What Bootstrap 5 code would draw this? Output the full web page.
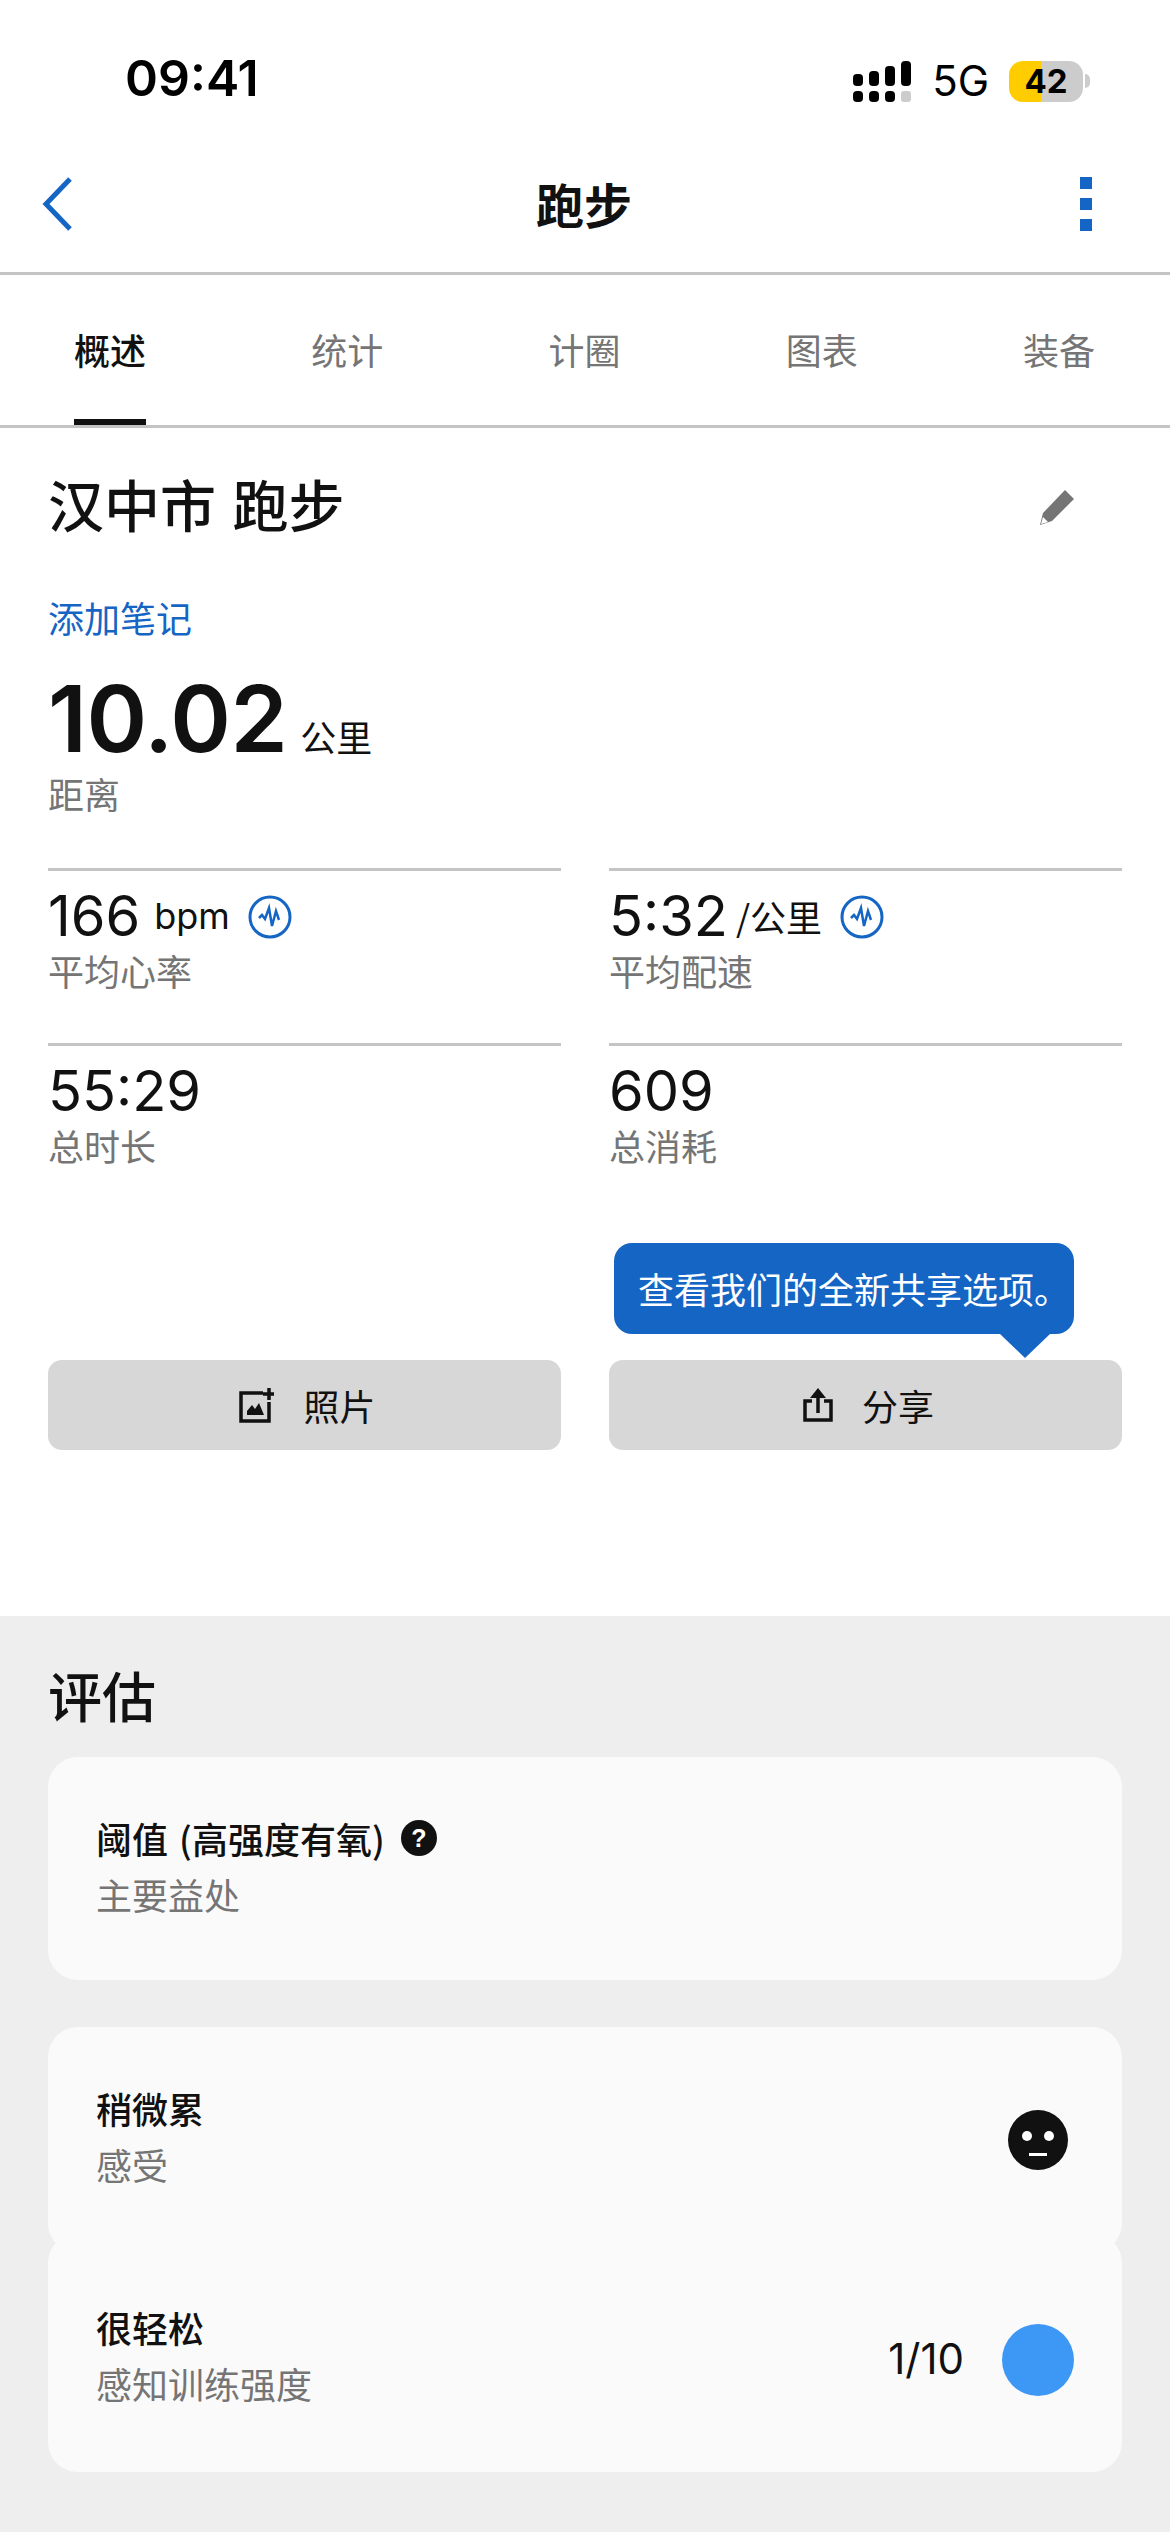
<!DOCTYPE html>
<html lang="zh-CN">
<head>
  <meta charset="UTF-8" />
  <meta name="viewport" content="width=device-width, initial-scale=1" />
  <title>跑步</title>
  <link href="https://cdn.jsdelivr.net/npm/bootstrap@5.3.0/dist/css/bootstrap.min.css" rel="stylesheet" />
  <style>
    body {
      width: 1170px;
      height: 2532px;
      overflow: hidden;
      background: #eee;
      color: #111;
      font-family: Inter, "Noto Sans CJK SC", sans-serif;
      font-size: 36px;
      line-height: 1.2;
    }
    .cjk { font-family: "Noto Sans CJK SC", sans-serif; }
    .top-area { background: #fff; height: 1616px; }

    .status-bar { height: 150px; padding: 50px 80px 0 125px; }
    .clock { font-size: 50px; font-weight: 600; color: #000; line-height: 56px; }
    .net { font-size: 42px; color: #000; margin: 0 20px 0 21px; line-height: 48px; }
    .battery {
      width: 74px; height: 41px; border-radius: 14px;
      background: linear-gradient(90deg, #ffcc00 43%, #ccc 43%);
      font-size: 33px; font-weight: 700; color: #000; line-height: 41px; text-align: center;
    }
    .batt-nub { width: 5px; height: 14px; background: #ccc; border-radius: 0 7px 7px 0; margin-left: 2px; }
    .signal-wrap { margin-top: 7px; }

    .app-bar { height: 125px; padding: 0 78px 15px 42px; border-bottom: 3px solid #c4c4c4; }
    .app-title { font-size: 48px; font-weight: 700; margin-left: 16px; }

    .tab-row { height: 153px; padding: 0 75px 0 74px; border-bottom: 3px solid #c4c4c4; }
    .tab-item { height: 150px; line-height: 148px; color: #757575; font-size: 36px; padding: 0; }
    .tab-item.active { color: #111; font-weight: 500; border-bottom: 6px solid #111; }

    .summary { padding: 0 48px; }
    .run-name { font-size: 56px; font-weight: 500; margin: 0; line-height: 80px; word-spacing: 4px; }
    .title-row { padding: 35px 0 0; }
    .pencil-btn { margin: 8px 48px 0 0; }
    .note-link { color: #1565c4; text-decoration: none; display: block; margin-top: 50px; line-height: 48px; }
    .big-num { font-size: 92px; font-weight: 600; line-height: 90px; letter-spacing: -0.5px; }
    .big-row { margin-top: 33px; }
    .unit { font-size: 36px; margin-left: 13px; }
    .sub-txt { color: #757575; font-size: 36px; line-height: 46px; }
    .dist-label { margin-top: 6px; }
    .stat-grid { margin-top: 52px; display: grid; grid-template-columns: 513px 513px; column-gap: 48px; }
    .stat-cell { border-top: 3px solid #c4c4c4; height: 175px; padding-top: 15px; }
    .stat-val { font-size: 56px; line-height: 61px; font-weight: 400; }
    .stat-unit { font-size: 36px; margin-left: 8px; }
    .bpm-unit { margin-left: 14px; }
    .perf-icon { margin-left: 18px; }

    .btn-row { display: grid; grid-template-columns: 513px 513px; column-gap: 48px; margin-top: 142px; position: relative; }
    .act-btn {
      height: 90px; background: #d7d7d7; border: 0; border-radius: 14px; color: #111; font-size: 36px; padding: 0 0 0 6px;
    }
    .act-btn svg { margin-right: 29px; }
    .tip-box {
      position: absolute; left: 566px; top: -117px; width: 460px; height: 91px; padding-left: 24px;
      background: #1565c4; color: #fff; border-radius: 18px; font-size: 36px; line-height: 91px;
      white-space: nowrap;
    }
    .tip-box::after {
      content: ""; position: absolute; left: 386px; top: 91px;
      border-left: 25px solid transparent; border-right: 25px solid transparent; border-top: 24px solid #1565c4;
    }

    .assess { padding: 0 48px; }
    .assess-title { font-size: 54px; font-weight: 500; margin: 0; padding-top: 16px; line-height: 125px; }
    .eval-card { background: #fafafa; border: 0; border-radius: 30px; padding: 0 48px; color: #111; }
    .eval-one { height: 223px; margin-bottom: 47px; padding-bottom: 8px; }
    .eval-top { height: 226px; }
    .eval-bottom { height: 239px; margin-top: -20px; padding-top: 14px; }
    .eval-text { padding-bottom: 12px; }
    .eval-name { font-size: 36px; font-weight: 500; line-height: 52px; margin-bottom: 7px; word-spacing: 3px; }
    .eval-num { font-size: 42px; margin-right: 38px; }
    .rpe-dot { width: 72px; height: 72px; border-radius: 50%; background: #3d97f5; }
    .face-icon { margin-right: 6px; }
    .help-icon { margin-left: 16px; }
  </style>
</head>
<body>
  <div class="top-area">
    <div class="status-bar d-flex justify-content-between align-items-start">
      <div class="clock">09:41</div>
      <div class="signal-wrap d-flex align-items-center">
        <svg width="58" height="41" viewBox="0 0 58 41" fill="#000">
          <rect x="0" y="13" width="10" height="12" rx="4"/><rect x="16" y="10" width="10" height="15" rx="4"/>
          <rect x="32" y="5" width="10" height="20" rx="4"/><rect x="48" y="0" width="10" height="25" rx="4"/>
          <rect x="0" y="30" width="10" height="11" rx="4"/><rect x="16" y="30" width="10" height="11" rx="4"/>
          <rect x="32" y="30" width="10" height="11" rx="4"/><rect x="48" y="30" width="10" height="11" rx="3" fill="#ccc"/>
        </svg>
        <div class="net">5G</div>
        <div class="battery">42</div>
        <div class="batt-nub"></div>
      </div>
    </div>

    <div class="app-bar d-flex justify-content-between align-items-center">
      <svg width="30" height="54" viewBox="0 0 30 54" fill="none" stroke="#1565c4" stroke-width="5"><path d="M28 2 L4 27 L28 52"/></svg>
      <div class="app-title cjk">跑步</div>
      <svg width="12" height="54" viewBox="0 0 12 54" fill="#1565c4"><rect width="12" height="12"/><rect y="21" width="12" height="12"/><rect y="42" width="12" height="12"/></svg>
    </div>

    <ul class="nav tab-row justify-content-between cjk">
      <li class="nav-item"><a class="nav-link tab-item active" href="#">概述</a></li>
      <li class="nav-item"><a class="nav-link tab-item" href="#">统计</a></li>
      <li class="nav-item"><a class="nav-link tab-item" href="#">计圈</a></li>
      <li class="nav-item"><a class="nav-link tab-item" href="#">图表</a></li>
      <li class="nav-item"><a class="nav-link tab-item" href="#">装备</a></li>
    </ul>

    <div class="summary">
      <div class="title-row d-flex justify-content-between align-items-center">
        <h1 class="run-name cjk">汉中市 跑步</h1>
        <svg class="pencil-btn" width="34" height="35" viewBox="0 0 34 35" fill="#757575"><path d="M25 0 L34 9 L12 31 L0 35 L3 23 Z"/><path d="M3 27 L8 32 L1 34 Z" fill="#fff"/></svg>
      </div>
      <a class="note-link cjk" href="#">添加笔记</a>
      <div class="big-row d-flex align-items-baseline">
        <span class="big-num">10.02</span><span class="unit cjk">公里</span>
      </div>
      <div class="sub-txt dist-label cjk">距离</div>

      <div class="stat-grid">
        <div class="stat-cell">
          <div class="d-flex align-items-center">
            <span class="stat-val">166</span><span class="stat-unit bpm-unit">bpm</span>
            <svg class="perf-icon" width="44" height="44" viewBox="0 0 44 44" fill="none" stroke="#1565c4" stroke-width="3"><circle cx="22" cy="22" r="20"/><path d="M11 23 L14 20 L17 24 L21 13 L24 31 L28 16 L31 25" stroke-width="2.5"/></svg>
          </div>
          <div class="sub-txt cjk">平均心率</div>
        </div>
        <div class="stat-cell">
          <div class="d-flex align-items-center">
            <span class="stat-val">5:32</span><span class="stat-unit cjk">/公里</span>
            <svg class="perf-icon" width="44" height="44" viewBox="0 0 44 44" fill="none" stroke="#1565c4" stroke-width="3"><circle cx="22" cy="22" r="20"/><path d="M11 23 L14 20 L17 24 L21 13 L24 31 L28 16 L31 25" stroke-width="2.5"/></svg>
          </div>
          <div class="sub-txt cjk">平均配速</div>
        </div>
        <div class="stat-cell">
          <div class="stat-val">55:29</div>
          <div class="sub-txt cjk">总时长</div>
        </div>
        <div class="stat-cell">
          <div class="stat-val">609</div>
          <div class="sub-txt cjk">总消耗</div>
        </div>
      </div>

      <div class="btn-row">
        <button class="btn act-btn cjk d-flex align-items-center justify-content-center">
          <svg width="35" height="35" viewBox="0 0 35 35"><path d="M24 5 H2 V33 H30 V14" fill="none" stroke="#111" stroke-width="3.5"/><path d="M30 0 V12 M24 6 H35" stroke="#111" stroke-width="3.5"/><path d="M8 27 L8 23 L13 17 L16 21 L20 15 L25 27 Z" fill="#111"/></svg>
          照片
        </button>
        <button class="btn act-btn cjk d-flex align-items-center justify-content-center">
          <svg width="30" height="34" viewBox="0 0 30 34"><path d="M9 13 H2 V32 H28 V13 H21" fill="none" stroke="#111" stroke-width="3.5"/><path d="M15 25 V3" stroke="#111" stroke-width="3.5"/><path d="M7 10 L15 0 L23 10 Z" fill="#111"/></svg>
          分享
        </button>
        <div class="tip-box cjk">查看我们的全新共享选项。</div>
      </div>
    </div>
  </div>

  <div class="assess">
    <h2 class="assess-title cjk">评估</h2>
    <div class="card eval-card eval-one justify-content-center">
      <div class="eval-name cjk d-flex align-items-center">阈值 (高强度有氧)
        <svg class="help-icon" width="36" height="36" viewBox="0 0 36 36"><circle cx="18" cy="18" r="18" fill="#111"/><text x="18" y="27" text-anchor="middle" fill="#fff" font-size="25" font-weight="700" font-family="Liberation Sans">?</text></svg>
      </div>
      <div class="sub-txt cjk">主要益处</div>
    </div>
    <div class="card eval-card eval-top flex-row justify-content-between align-items-center">
      <div class="eval-text">
        <div class="eval-name cjk">稍微累</div>
        <div class="sub-txt cjk">感受</div>
      </div>
      <svg class="face-icon" width="60" height="60" viewBox="0 0 60 60"><circle cx="30" cy="30" r="30" fill="#111"/><circle cx="19" cy="26" r="5" fill="#fff"/><circle cx="41" cy="26" r="5" fill="#fff"/><rect x="21" y="43" width="18" height="3" fill="#fff"/></svg>
    </div>
    <div class="card eval-card eval-bottom flex-row justify-content-between align-items-center">
      <div class="eval-text">
        <div class="eval-name cjk">很轻松</div>
        <div class="sub-txt cjk">感知训练强度</div>
      </div>
      <div class="d-flex align-items-center">
        <span class="eval-num">1/10</span>
        <div class="rpe-dot"></div>
      </div>
    </div>
  </div>

  <script src="https://cdn.jsdelivr.net/npm/bootstrap@5.3.0/dist/js/bootstrap.bundle.min.js"></script>
</body>
</html>
